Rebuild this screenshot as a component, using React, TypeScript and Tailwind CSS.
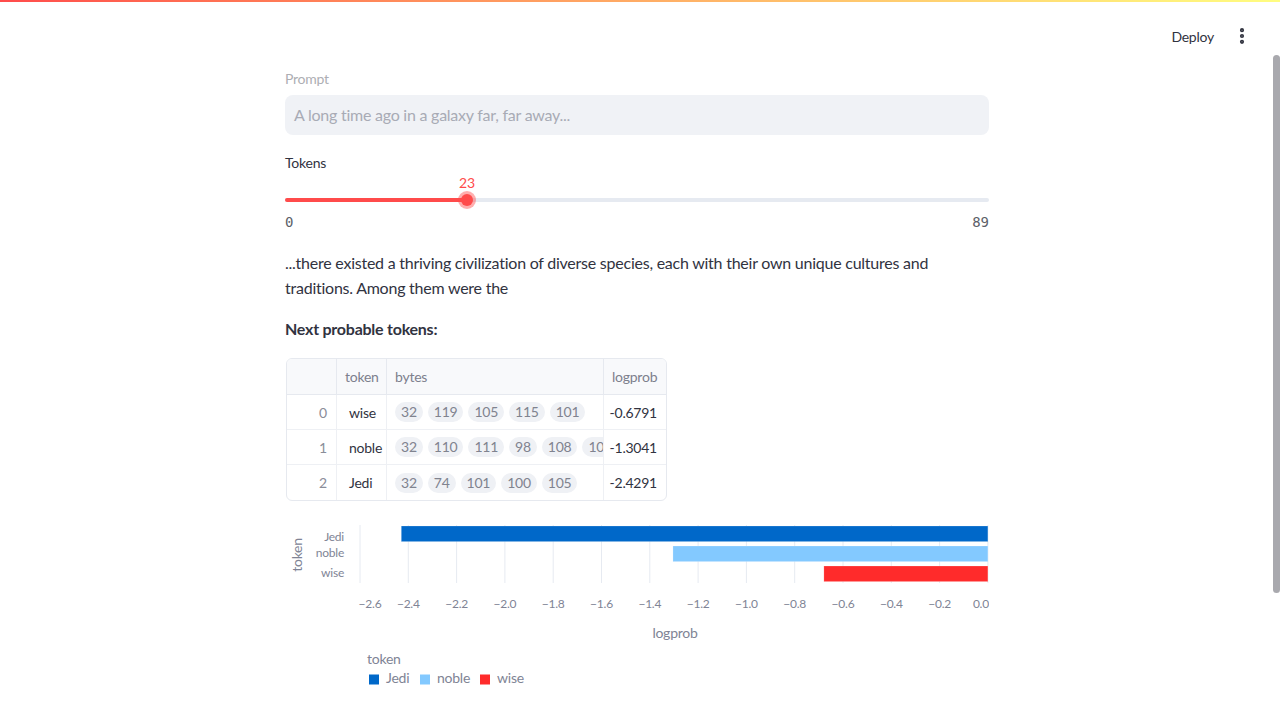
import { EllipsisVertical } from 'lucide-react'

const rows = [
  { idx: 0, token: 'wise', bytes: [32, 119, 105, 115, 101], logprob: -0.6791 },
  { idx: 1, token: 'noble', bytes: [32, 110, 111, 98, 108, 101], logprob: -1.3041 },
  { idx: 2, token: 'Jedi', bytes: [32, 74, 101, 100, 105], logprob: -2.4291 },
]

const bars = [
  { token: 'Jedi', value: -2.4291, color: '#0068c9', y: 16, labelY: 28 },
  { token: 'noble', value: -1.3041, color: '#83c9ff', y: 36, labelY: 44 },
  { token: 'wise', value: -0.6791, color: '#ff2b2b', y: 56, labelY: 64 },
]

// plot x range [-2.6, 0] -> [75, 703]
const px = (v: number) => 75 + (v + 2.6) * 241.5
const ticks = [-2.6, -2.4, -2.2, -2.0, -1.8, -1.6, -1.4, -1.2, -1.0, -0.8, -0.6, -0.4, -0.2, 0]

function fmt(v: number) {
  if (v === 0) return '0.0'
  return '\u2212' + Math.abs(v).toFixed(1)
}

function LogprobChart() {
  return (
    <svg width={704} height={190} className="block" style={{ fontFamily: 'Lato, sans-serif' }}>
      {ticks.map((t) => (
        <line key={t} x1={px(t)} x2={px(t)} y1={15} y2={73} stroke="#e6eaf1" strokeWidth={1} />
      ))}
      {bars.map((b) => (
        <rect
          key={b.token}
          x={px(b.value)}
          y={b.y}
          width={px(0) - px(b.value)}
          height={15.6}
          fill={b.color}
          stroke="#ffffff"
          strokeOpacity={0.4}
          strokeWidth={0.5}
        />
      ))}
      {bars.map((b) => (
        <text key={b.token} x={59} y={b.labelY} textAnchor="end" dominantBaseline="middle" fontSize={12} fill="#808495">
          {b.token}
        </text>
      ))}
      <text x={13} y={45} transform="rotate(-90 13 45)" textAnchor="middle" dominantBaseline="middle" fontSize={14} fill="#808495">
        token
      </text>
      {ticks.map((t, i) => {
        let cx = px(t)
        if (i === 0) cx += 10
        if (t === 0) cx -= 7
        return (
          <text key={t} x={cx} y={95} textAnchor="middle" dominantBaseline="middle" fontSize={12} fill="#808495">
            {fmt(t)}
          </text>
        )
      })}
      <text x={390} y={124} textAnchor="middle" dominantBaseline="middle" fontSize={14} fill="#808495">
        logprob
      </text>
      <text x={82} y={150} dominantBaseline="middle" fontSize={14} fill="#808495">
        token
      </text>
      {[
        { label: 'Jedi', color: '#0068c9', x: 84 },
        { label: 'noble', color: '#83c9ff', x: 135 },
        { label: 'wise', color: '#ff2b2b', x: 195 },
      ].map((l) => (
        <g key={l.label}>
          <rect x={l.x} y={164.5} width={10} height={10} fill={l.color} />
          <text x={l.x + 17} y={169.5} dominantBaseline="middle" fontSize={14} fill="#808495">
            {l.label}
          </text>
        </g>
      ))}
    </svg>
  )
}

function TokenTable() {
  return (
    <div className="w-[381px] overflow-hidden rounded-md border border-[#e6e9ef] text-[14px]">
      <div className="flex h-[36px] bg-[#f8f9fb] text-[#7d808d] border-b border-[#e6e9ef]">
        <div className="w-[50px] shrink-0 border-r border-[#e6e9ef]" />
        <div className="w-[50px] shrink-0 border-r border-[#e6e9ef] flex items-center px-2">token</div>
        <div className="w-[217px] shrink-0 border-r border-[#e6e9ef] flex items-center px-2">bytes</div>
        <div className="flex-1 flex items-center px-2">logprob</div>
      </div>
      {rows.map((r, i) => (
        <div key={r.idx} className={`flex h-[35px] ${i < rows.length - 1 ? 'border-b border-[#eef0f4]' : ''}`}>
          <div className="w-[50px] shrink-0 border-r border-[#eef0f4] flex items-center justify-end pr-[9px] text-[#8a8d99]">
            {r.idx}
          </div>
          <div className="w-[50px] shrink-0 border-r border-[#eef0f4] flex items-center pl-3 text-[#31333f]">
            {r.token}
          </div>
          <div className="w-[217px] shrink-0 border-r border-[#eef0f4] overflow-hidden">
            <div className="flex h-full items-center gap-[5px] pl-2 w-max">
              {r.bytes.map((b, j) => (
                <span key={j} className="shrink-0 h-[20px] px-[6px] rounded-full bg-[#eff1f5] text-[#80838f] flex items-center leading-none">
                  {b}
                </span>
              ))}
            </div>
          </div>
          <div className="flex-1 flex items-center justify-end pr-[9px] text-[#31333f]">{r.logprob.toFixed(4)}</div>
        </div>
      ))}
    </div>
  )
}

export default function App() {
  const pct = (23 / 89) * 100
  return (
    <div
      className="relative h-[720px] w-full overflow-hidden bg-white text-[#31333f] tracking-[-0.015em]"
      style={{ fontFamily: 'Lato, sans-serif' }}
    >
      <div className="h-[2px] w-full bg-gradient-to-r from-[#ff4b4b] to-[#fffd80]" />

      <div className="flex h-[58px] items-center justify-end pr-[28px]">
        <span className="text-[14px] text-[#31333f] mr-[18px] mt-[10px]">Deploy</span>
        <EllipsisVertical size={20} strokeWidth={3} className="text-[#31333f] mt-[10px]" />
      </div>

      <div className="ml-[285px] w-[704px]">
        <div className="text-[14px] leading-[20px] text-[#adaeb3] mt-[9px]">Prompt</div>
        <div className="mt-[6px] h-[40px] rounded-lg bg-[#f0f2f6] flex items-center px-[9px] text-[16px] text-[#a8abb5]">
          A long time ago in a galaxy far, far away...
        </div>

        <div className="mt-[18px] text-[14px] leading-[20px]">Tokens</div>
        <div className="relative h-[37px]">
          <div className="absolute left-0 right-0 top-[25px] h-[4px] rounded-full bg-[#e6eaf1]" />
          <div className="absolute left-0 top-[25px] h-[4px] rounded-full bg-[#ff4b4b]" style={{ width: `${pct}%` }} />
          <div
            className="absolute top-[27px] -translate-x-1/2 -translate-y-1/2 h-[18px] w-[18px] rounded-full bg-[#ff4b4b]/45 flex items-center justify-center"
            style={{ left: `${pct}%` }}
          >
            <div className="h-[12px] w-[12px] rounded-full bg-[#ff4b4b]" />
          </div>
          <div
            className="absolute top-0 -translate-x-1/2 text-[14px] text-[#ff4b4b] leading-[20px]"
            style={{ left: `${pct}%` }}
          >
            23
          </div>
        </div>
        <div
          className="flex justify-between text-[14px] leading-[20px] text-[#5d5f69] mt-[2px] tracking-normal"
          style={{ fontFamily: '"DejaVu Sans Mono", monospace' }}
        >
          <span>0</span>
          <span>89</span>
        </div>

        <p className="mt-[18px] text-[16px] leading-[25px]">
          ...there existed a thriving civilization of diverse species, each with their own unique cultures and traditions. Among them were the
        </p>

        <p className="mt-[16px] text-[16px] leading-[25px] font-bold">Next probable tokens:</p>

        <div className="mt-[17px] ml-px">
          <TokenTable />
        </div>

        <div className="mt-[9px]">
          <LogprobChart />
        </div>
      </div>

      <div className="absolute right-0 top-[55px] h-[538px] w-[7px] rounded-full bg-[#a9a9ae]" />
    </div>
  )
}
